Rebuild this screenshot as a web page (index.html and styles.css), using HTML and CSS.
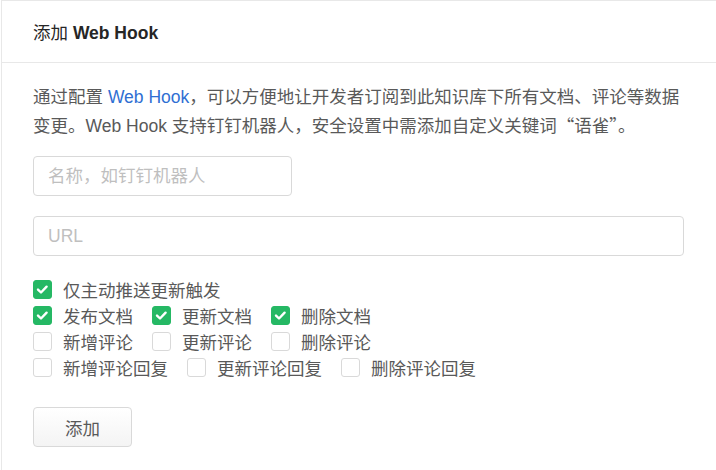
FILE: index.html
```html
<!DOCTYPE html>
<html lang="zh-CN">
<head>
  <meta charset="UTF-8">
  <title>添加 Web Hook</title>
  <link rel="stylesheet" href="styles.css">
</head>
<body>

  <div class="panel">
    <div class="panel-header">
      <h2 class="panel-title">添加 <span class="title-en">Web Hook</span></h2>
    </div>

    <div class="panel-body">
      <p class="desc">通过配置 <a href="#">Web Hook</a>，可以方便地让开发者订阅到此知识库下所有文档、评论等数据变更。Web Hook 支持钉钉机器人，安全设置中需添加自定义关键词<span class="cjk">“语雀”</span>。</p>

      <input class="field field-name" type="text" placeholder="名称，如钉钉机器人">
      <input class="field field-url" type="text" placeholder="URL">

      <div class="checks">
        <div class="check-row">
          <label class="check"><span class="box checked"></span>仅主动推送更新触发</label>
        </div>
        <div class="check-row">
          <label class="check"><span class="box checked"></span>发布文档</label>
          <label class="check"><span class="box checked"></span>更新文档</label>
          <label class="check"><span class="box checked"></span>删除文档</label>
        </div>
        <div class="check-row">
          <label class="check"><span class="box"></span>新增评论</label>
          <label class="check"><span class="box"></span>更新评论</label>
          <label class="check"><span class="box"></span>删除评论</label>
        </div>
        <div class="check-row">
          <label class="check"><span class="box"></span>新增评论回复</label>
          <label class="check"><span class="box"></span>更新评论回复</label>
          <label class="check"><span class="box"></span>删除评论回复</label>
        </div>
      </div>

      <button class="btn" type="button">添加</button>
    </div>
  </div>

</body>
</html>
```

FILE: styles.css
```css
/* Reset */
* { box-sizing: border-box; }

body {
  margin: 0;
  background: #fff;
  font-family: "Liberation Sans", Arial, "Noto Sans CJK SC", sans-serif;
  color: #595959;
}

/* Card */
.panel {
  margin-left: 1px;
  width: 800px;
  background: #fff;
  border: 1px solid #e8e8e8;
}

.panel-header {
  height: 62px;
  padding: 0 31px;
  display: flex;
  align-items: center;
  border-bottom: 1px solid #e8e8e8;
}
.panel-title {
  margin: 0;
  font-size: 17.5px;
  font-weight: normal;
  color: #262626;
}
.title-en { font-weight: bold; }

.panel-body {
  width: 712px;
  padding: 20px 31px 30px;
}

/* Description */
.desc {
  margin: 0 0 15px;
  font-size: 17.5px;
  line-height: 29px;
}
.desc a {
  color: #2f6fd3;
  text-decoration: none;
}
/* full-width quotes; keep the line box from growing */
.cjk {
  font-family: "Noto Sans CJK SC", sans-serif;
  line-height: 1;
}

/* Inputs */
.field {
  display: block;
  height: 40px;
  padding: 0 14px;
  border: 1px solid #d9d9d9;
  border-radius: 4px;
  font-family: inherit;
  font-size: 17.5px;
  color: #262626;
  outline: none;
}
.field::placeholder { color: #bfbfbf; }
.field-name { width: 259px; }
.field-url  { width: 651px; margin-top: 20px; }

/* Checkboxes */
.checks { margin-top: 20px; }
.check-row {
  display: flex;
  height: 26px;
  align-items: center;
}
.check {
  display: inline-flex;
  align-items: center;
  gap: 11px;
  margin-right: 19px;
  font-size: 17.5px;
  color: #595959;
}
.box {
  width: 19px;
  height: 19px;
  border: 1px solid #d9d9d9;
  border-radius: 3px;
  background: #fff;
}
.box.checked {
  border-color: #25b864;
  background: #25b864 url("data:image/svg+xml,%3Csvg xmlns='http://www.w3.org/2000/svg' viewBox='0 0 19 19'%3E%3Cpath d='M5 9.6l3 2.9 5.6-5.8' fill='none' stroke='%23fff' stroke-width='2.4' stroke-linecap='round' stroke-linejoin='round'/%3E%3C/svg%3E") center / 19px 19px no-repeat;
}

/* Button */
.btn {
  display: block;
  margin-top: 27px;
  width: 99px;
  height: 40px;
  border: 1px solid #d9d9d9;
  border-radius: 4px;
  background: linear-gradient(#fff, #f4f4f4);
  font-family: inherit;
  font-size: 17.5px;
  color: #595959;
  cursor: pointer;
}
```
